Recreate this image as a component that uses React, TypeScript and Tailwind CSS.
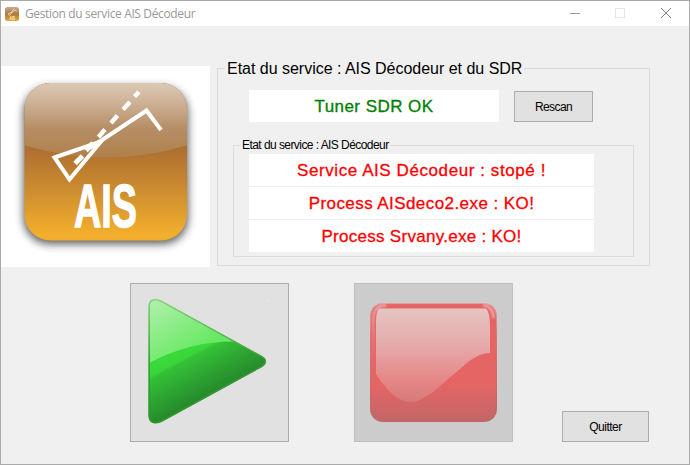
import type { ReactNode } from 'react';

function AisLogo() {
  return (
    <svg width="209" height="201" viewBox="1 66 209 201" className="block shrink-0 bg-white">
      <defs>
        <linearGradient id="amber" x1="0" y1="0" x2="0" y2="1">
          <stop offset="0" stopColor="#a87444" />
          <stop offset="0.42" stopColor="#ae7030" />
          <stop offset="0.65" stopColor="#c98930" />
          <stop offset="0.97" stopColor="#f4b02c" />
          <stop offset="1" stopColor="#eeac2d" />
        </linearGradient>
        <linearGradient id="gloss" x1="0" y1="83" x2="0" y2="158" gradientUnits="userSpaceOnUse">
          <stop offset="0" stopColor="#dcc9b4" />
          <stop offset="0.3" stopColor="#cbae92" />
          <stop offset="0.6" stopColor="#b68e66" />
          <stop offset="1" stopColor="#b0804a" />
        </linearGradient>
        <clipPath id="tile"><rect x="24.5" y="83" width="162.5" height="157.5" rx="26" /></clipPath>
        <filter id="blur" x="-20%" y="-20%" width="140%" height="140%"><feGaussianBlur stdDeviation="4" /></filter>
      </defs>
      <rect x="23.5" y="87" width="164.5" height="157" rx="26" fill="#333" opacity="0.8" filter="url(#blur)" />
      <g clipPath="url(#tile)">
        <rect x="24" y="83" width="164" height="158" fill="url(#amber)" />
        <path d="M24 83H188V145Q148 157.500 106 157.500T24 145Z" fill="url(#gloss)" />
      </g>
      <g fill="none" stroke="#fff" strokeWidth="4">
        <path d="M54.500 157.500L101 141.500L69.500 179.500Z" />
        <path d="M90 148L146.500 110.500L161 130" />
        <path d="M139 92L134.500 96.500M130 102L123 109.500M117.500 115.500L111 123M105 129.500L98.500 137" strokeWidth="4.400" />
        <path d="M93 143L86 150.500M82.500 156L75 163.500" strokeWidth="5" />
      </g>
      <text x="74" y="227" textLength="63" lengthAdjust="spacingAndGlyphs" fill="#fff" stroke="#fff" strokeWidth="1.400" className="font-['Liberation_Sans',Arial,sans-serif] text-[61px] font-bold">AIS</text>
    </svg>
  );
}

function TitleIcon() {
  return (
    <svg width="14" height="14" viewBox="0 0 14 14" className="ml-1 shrink-0">
      <defs><linearGradient id="mini" x1="0" y1="0" x2="0" y2="1"><stop stopColor="#c5aa8b" /><stop offset=".5" stopColor="#ae783e" /><stop offset="1" stopColor="#e5a72f" /></linearGradient></defs>
      <rect width="14" height="14" rx="2.500" fill="url(#mini)" />
      <path d="M3 6.500L7 5.500L4.500 8.500ZM7 5.500L10 3L12 4.500M6 6L9 1.500" fill="none" stroke="#f4e8d8" strokeWidth=".7" />
      <text x="4.500" y="12.500" textLength="5.500" lengthAdjust="spacingAndGlyphs" fill="#fff3d8" className="font-['Liberation_Sans',sans-serif] text-[5px] font-bold">AIS</text>
    </svg>
  );
}

function PlayIcon() {
  return (
    <svg width="157" height="157" viewBox="131 284 157 157" className="block">
      <defs>
        <linearGradient id="green" x1="170" y1="328" x2="207" y2="398" gradientUnits="userSpaceOnUse">
          <stop offset="0" stopColor="#3ee33c" /><stop offset=".42" stopColor="#39d638" /><stop offset=".46" stopColor="#34c037" /><stop offset="1" stopColor="#25872b" />
        </linearGradient>
        <linearGradient id="mint" x1="155" y1="300" x2="190" y2="355" gradientUnits="userSpaceOnUse">
          <stop stopColor="#aef0aa" /><stop offset="1" stopColor="#68e963" />
        </linearGradient>
        <linearGradient id="greenEdge" x1="0" y1="299" x2="0" y2="423" gradientUnits="userSpaceOnUse">
          <stop stopColor="#8bcf87" /><stop offset=".5" stopColor="#3f9a3a" /><stop offset="1" stopColor="#2e9926" />
        </linearGradient>
        <clipPath id="triangle"><path d="M148.500 306Q149 299 155 299Q158 299 161 300.500L260 355Q266 358 266 361Q266 365 261 367.500L161 422Q149 426 148.500 416Z" /></clipPath>
      </defs>
      <g clipPath="url(#triangle)">
        <rect x="148" y="298" width="119" height="127" fill="url(#green)" />
        <path d="M148 298H235V341.500Q190 341 148 363.500Z" fill="url(#mint)" />
      </g>
      <path d="M149.200 306Q149.500 299.700 155 299.700Q158 299.700 161 301.200L260 355.700Q265.300 358.500 265.300 361Q265.300 364.500 261 366.800L161 421.500Q149.700 425.500 149.200 416Z" fill="none" stroke="url(#greenEdge)" strokeWidth="1.500" />
      <rect x="268" y="300" width="1" height="1" fill="#fff" />
    </svg>
  );
}

function StopIcon() {
  return (
    <svg width="157" height="157" viewBox="355 284 157 157" className="block">
      <defs>
        <linearGradient id="red" x1="0" y1="303" x2="0" y2="422" gradientUnits="userSpaceOnUse">
          <stop stopColor="#e56565" /><stop offset=".68" stopColor="#e56565" /><stop offset="1" stopColor="#c26666" />
        </linearGradient>
        <linearGradient id="rose" x1="0" y1="308" x2="0" y2="402" gradientUnits="userSpaceOnUse">
          <stop stopColor="#e6c4c4" /><stop offset=".4" stopColor="#e5aaaa" /><stop offset=".78" stopColor="#e68585" /><stop offset="1" stopColor="#d57b7b" />
        </linearGradient>
        <linearGradient id="edge" x1="0" y1="303" x2="0" y2="422" gradientUnits="userSpaceOnUse">
          <stop stopColor="#dea0a0" /><stop offset=".3" stopColor="#d87575" /><stop offset="1" stopColor="#bd6666" />
        </linearGradient>
        <linearGradient id="shine" x1="0" y1="305" x2="0" y2="370" gradientUnits="userSpaceOnUse">
          <stop stopColor="#edc3c3" /><stop offset="1" stopColor="#e98080" stopOpacity="0" />
        </linearGradient>
        <filter id="soften" x="-30%" y="-30%" width="160%" height="160%"><feGaussianBlur stdDeviation="0.8" /></filter>
      </defs>
      <rect x="370.500" y="303.500" width="126" height="118" rx="12" fill="url(#red)" stroke="url(#edge)" />
      <g fill="none" filter="url(#soften)">
        <path d="M373.300 370V318Q373.300 306 386 305" stroke="url(#shine)" strokeWidth="2" />
        <path d="M483 305Q493 306 493.700 318" stroke="#efb9b9" strokeWidth="2" />
      </g>
      <path d="M376 374V322Q376 312 379 308.500H486Q490 312 490 327V353Q477 353 461 368L433 392Q418 403 410 402Q394 402 376 374Z" fill="url(#rose)" />
    </svg>
  );
}

function Status({ children, className }: { children: ReactNode; className: string }) {
  return <div className={`flex h-8 items-center justify-center whitespace-nowrap bg-white pt-[2px] text-[17px] leading-[20px] [-webkit-text-stroke:0.3px] ${className}`}>{children}</div>;
}

export default function App() {
  return (
    <main className="flex h-[465px] w-[690px] flex-col overflow-hidden border border-[#aaa] bg-[#f0f0f0] font-['Liberation_Sans',Arial,sans-serif] text-black">
      <header className="flex h-[25px] shrink-0 items-center bg-white">
        <TitleIcon />
        <h1 className="ml-[6px] flex-1 whitespace-nowrap font-['Open_Sans',sans-serif] text-[12px] tracking-[-0.36px] text-[#999]">Gestion du service AIS Décodeur</h1>
        <svg width="120" height="25" viewBox="569 1 120 25" fill="none" shapeRendering="crispEdges">
          <path d="M570 13.500H580" stroke="#999" />
          <rect x="615.500" y="8.500" width="9" height="9" stroke="#e7e7e7" />
          <path d="M661 8L671 18M671 8L661 18" stroke="#888" shapeRendering="auto" />
        </svg>
      </header>
      <section className="flex h-[241px] pt-10">
        <AisLogo />
        <fieldset className="ml-[7px] mt-[-7px] h-[207px] w-[433px] border border-[#dcdcdc] pl-[15px]">
          <legend className="ml-[-8px] h-[19px] whitespace-nowrap pl-[2px] pr-[2px] text-[16px] leading-[19px] tracking-[-0.02px]">Etat du service : AIS Décodeur et du SDR</legend>
          <div className="flex items-start pl-4 pt-[12px]">
            <Status className="w-[250px] tracking-[0.45px] text-[#008000]">Tuner SDR OK</Status>
            <button className="ml-[15px] mt-px h-[31px] w-[79px] border border-[#adadad] bg-[#e1e1e1] text-[12px] tracking-[-0.6px]">Rescan</button>
          </div>
          <fieldset className="mt-[16px] h-[119px] w-[401px] border border-[#dcdcdc] pl-[15px]">
            <legend className="ml-[-8px] h-[14px] whitespace-nowrap px-px text-[12px] leading-[14px] tracking-[-0.56px]">Etat du service : AIS Décodeur</legend>
            <div className="mt-[2px] flex w-[345px] flex-col gap-px text-[#f00]">
              <Status className="tracking-[0.58px]">Service AIS Décodeur : stopé !</Status>
              <Status className="tracking-[0.43px]">Process AISdeco2.exe : KO!</Status>
              <Status className="tracking-[0.28px]">Process Srvany.exe : KO!</Status>
            </div>
          </fieldset>
        </fieldset>
      </section>
      <section className="flex pl-[129px] pt-4">
        <button aria-label="Démarrer" className="size-[159px] border border-[#adadad] bg-[#e1e1e1]"><PlayIcon /></button>
        <button aria-label="Arrêter" className="ml-[65px] size-[159px] border border-[#bfbfbf] bg-[#ccc]"><StopIcon /></button>
        <button className="ml-[49px] mt-auto h-[31px] w-[87px] border border-[#adadad] bg-[#e1e1e1] text-[12px] tracking-[-0.5px]">Quitter</button>
      </section>
    </main>
  );
}
